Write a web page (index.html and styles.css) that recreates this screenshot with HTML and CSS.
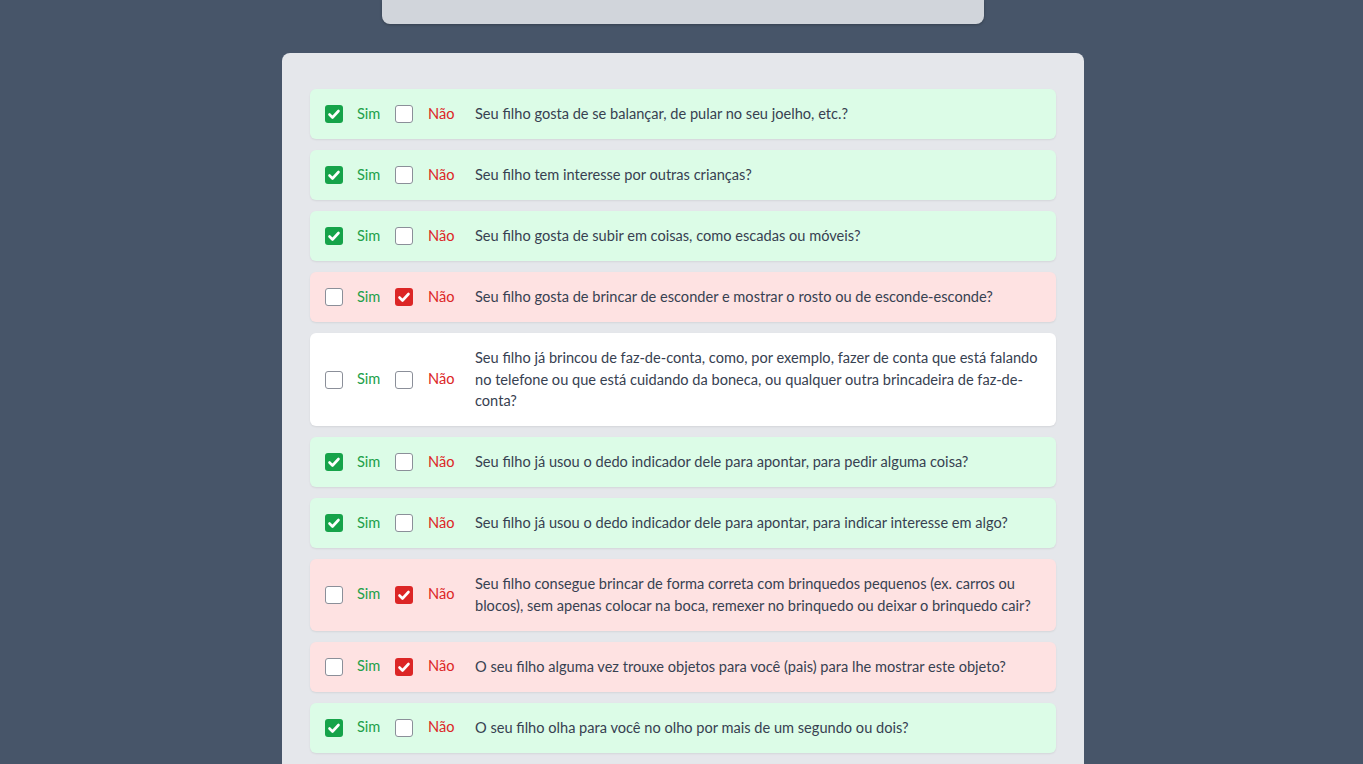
FILE: index.html
```html
<!DOCTYPE html>
<html lang="pt-BR">
<head>
<meta charset="utf-8">
<title>Questionário</title>
<link rel="stylesheet" href="styles.css">
</head>
<body>
<div class="topcard"></div>
<main class="panel">
  <div class="row yes"><span class="box checked g"><svg viewBox="0 0 18 18"><path d="M4.5 9.5l3 3 6-6.5"/></svg></span><span class="sim">Sim</span><span class="box"></span><span class="nao">Não</span><p class="q">Seu filho gosta de se balançar, de pular no seu joelho, etc.?</p></div>
  <div class="row yes"><span class="box checked g"><svg viewBox="0 0 18 18"><path d="M4.5 9.5l3 3 6-6.5"/></svg></span><span class="sim">Sim</span><span class="box"></span><span class="nao">Não</span><p class="q">Seu filho tem interesse por outras crianças?</p></div>
  <div class="row yes"><span class="box checked g"><svg viewBox="0 0 18 18"><path d="M4.5 9.5l3 3 6-6.5"/></svg></span><span class="sim">Sim</span><span class="box"></span><span class="nao">Não</span><p class="q">Seu filho gosta de subir em coisas, como escadas ou móveis?</p></div>
  <div class="row no"><span class="box"></span><span class="sim">Sim</span><span class="box checked r"><svg viewBox="0 0 18 18"><path d="M4.5 9.5l3 3 6-6.5"/></svg></span><span class="nao">Não</span><p class="q">Seu filho gosta de brincar de esconder e mostrar o rosto ou de esconde-esconde?</p></div>
  <div class="row"><span class="box"></span><span class="sim">Sim</span><span class="box"></span><span class="nao">Não</span><p class="q">Seu filho já brincou de faz-de-conta, como, por exemplo, fazer de conta que está falando no telefone ou que está cuidando da boneca, ou qualquer outra brincadeira de faz-de-conta?</p></div>
  <div class="row yes"><span class="box checked g"><svg viewBox="0 0 18 18"><path d="M4.5 9.5l3 3 6-6.5"/></svg></span><span class="sim">Sim</span><span class="box"></span><span class="nao">Não</span><p class="q">Seu filho já usou o dedo indicador dele para apontar, para pedir alguma coisa?</p></div>
  <div class="row yes"><span class="box checked g"><svg viewBox="0 0 18 18"><path d="M4.5 9.5l3 3 6-6.5"/></svg></span><span class="sim">Sim</span><span class="box"></span><span class="nao">Não</span><p class="q">Seu filho já usou o dedo indicador dele para apontar, para indicar interesse em algo?</p></div>
  <div class="row no"><span class="box"></span><span class="sim">Sim</span><span class="box checked r"><svg viewBox="0 0 18 18"><path d="M4.5 9.5l3 3 6-6.5"/></svg></span><span class="nao">Não</span><p class="q">Seu filho consegue brincar de forma correta com brinquedos pequenos (ex. carros ou blocos), sem apenas colocar na boca, remexer no brinquedo ou deixar o brinquedo cair?</p></div>
  <div class="row no"><span class="box"></span><span class="sim">Sim</span><span class="box checked r"><svg viewBox="0 0 18 18"><path d="M4.5 9.5l3 3 6-6.5"/></svg></span><span class="nao">Não</span><p class="q">O seu filho alguma vez trouxe objetos para você (pais) para lhe mostrar este objeto?</p></div>
  <div class="row yes"><span class="box checked g"><svg viewBox="0 0 18 18"><path d="M4.5 9.5l3 3 6-6.5"/></svg></span><span class="sim">Sim</span><span class="box"></span><span class="nao">Não</span><p class="q">O seu filho olha para você no olho por mais de um segundo ou dois?</p></div>
  <div class="row"><span class="box"></span><span class="sim">Sim</span><span class="box"></span><span class="nao">Não</span><p class="q">Seu filho já pareceu muito sensível ao barulho (ex. tapando os ouvidos)?</p></div>
</main>
</body>
</html>
```
FILE: styles.css
```css
html, body {
  margin: 0;
  padding: 0;
}
body {
  background: #475569;
  font-family: "Lato", "Noto Sans", sans-serif;
  font-size: 14.6px;
  color: #374151;
  height: 764px;
  overflow: hidden;
  padding-left: 3px;
  box-sizing: border-box;
}
.topcard {
  width: 602px;
  height: 24px;
  margin: 0 auto 29px;
  background: #d1d5db;
  border-radius: 0 0 8px 8px;
  box-shadow: 0 1px 3px rgba(0,0,0,0.25);
}
.panel {
  width: 802px;
  box-sizing: border-box;
  margin: 0 auto;
  background: #e5e7eb;
  border-radius: 8px 8px 0 0;
  padding: 36px 28px 20px;
  display: flex;
  flex-direction: column;
  gap: 11px;
}
.row {
  display: flex;
  align-items: center;
  padding: 14.25px 15px;
  background: #ffffff;
  border-radius: 6px;
  box-shadow: 0 1px 2px rgba(0,0,0,0.08);
}
.row.yes { background: #dcfce7; }
.row.no { background: #fee2e2; }
.box {
  flex: none;
  width: 18px;
  height: 18px;
  box-sizing: border-box;
  border: 1px solid #8b8f99;
  border-radius: 3px;
  background: #ffffff;
  display: flex;
}
.box.checked { border: none; }
.box.g { background: #16a34a; }
.box.r { background: #dc2626; }
.box svg {
  width: 18px;
  height: 18px;
}
.box svg path {
  fill: none;
  stroke: #ffffff;
  stroke-width: 2.6;
  stroke-linecap: round;
  stroke-linejoin: round;
}
.sim {
  flex: none;
  color: #22a04a;
  margin: -1px 14px 0;
  width: 24px;
  line-height: 18px;
}
.nao {
  flex: none;
  color: #dc2626;
  margin: -1px 21px 0 15px;
  width: 26px;
  line-height: 18px;
}
.q {
  margin: 0;
  line-height: 21.5px;
  flex: 1;
}
```
